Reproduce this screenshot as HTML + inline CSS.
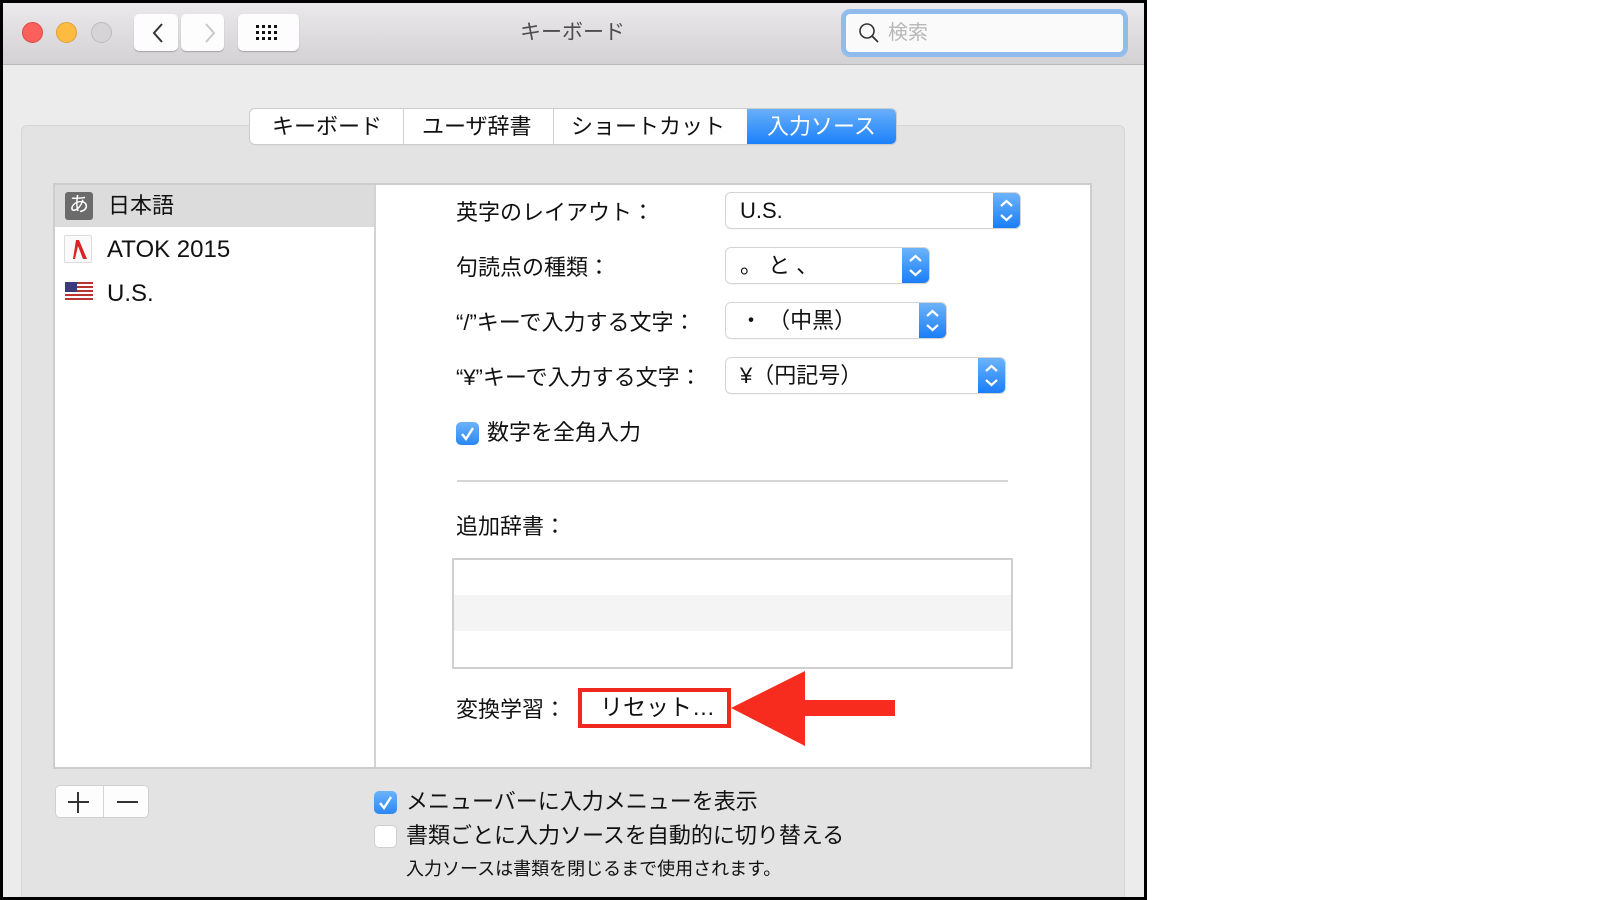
<!DOCTYPE html>
<html><head><meta charset="utf-8"><style>
*{margin:0;padding:0;box-sizing:border-box}
body{width:1600px;height:900px;background:#fff;position:relative;overflow:hidden;font-family:"Liberation Sans","Noto Sans CJK JP",sans-serif;color:#111}
.a{position:absolute}
.win{left:0;top:0;width:1147px;height:900px;background:#000}
.inner{left:3px;top:3px;width:1141px;height:894px;background:#ececec}
.tb{left:3px;top:3px;width:1141px;height:62px;background:linear-gradient(#ebe9eb,#d3d1d3);border-bottom:1px solid #b9b7b9}
.light{width:21px;height:21px;border-radius:50%;top:22px}
.btn{background:#fdfdfd;border-radius:5px;box-shadow:0 1px 1px rgba(0,0,0,.25)}
.t{white-space:nowrap;line-height:1}
.pop{background:#fff;border-radius:5px;box-shadow:0 0 0 1px #d4d4d4,0 1px 1px rgba(0,0,0,.2);height:35px}
.pop .b{position:absolute;right:0;top:0;width:27px;height:35px;background:linear-gradient(#6cb3fa,#1a7ef8);border-radius:0 5px 5px 0}
.pop .v{position:absolute;left:14px;top:7px;font-size:22px}
.cb{width:23px;height:23px;border-radius:5px;background:linear-gradient(#6cb3fa,#2a87f5)}
</style></head><body>
<div class="a win"></div>
<div class="a inner"></div>
<div class="a tb"></div>
<div class="a light" style="left:22px;background:#fc605c;border:1px solid #de4a46"></div>
<div class="a light" style="left:56px;background:#fdbc40;border:1px solid #dea235"></div>
<div class="a light" style="left:91px;background:#d6d4d6;border:1px solid #bdbbbd"></div>
<div class="a btn" style="left:134px;top:14px;width:44px;height:37px"></div>
<div class="a btn" style="left:181px;top:14px;width:43px;height:37px"></div>
<svg class="a" style="left:145px;top:20px" width="80" height="26"><path d="M17 4 L9 13 L17 22" fill="none" stroke="#333" stroke-width="2"/><path d="M61 4 L69 13 L61 22" fill="none" stroke="#c8c8c8" stroke-width="2"/></svg>
<div class="a btn" style="left:238px;top:14px;width:61px;height:37px"></div>
<svg class="a" style="left:256px;top:25px" width="26" height="16"><g fill="#111"><rect x="0" y="0" width="3" height="3"/><rect x="6" y="0" width="3" height="3"/><rect x="12" y="0" width="3" height="3"/><rect x="18" y="0" width="3" height="3"/><rect x="0" y="6" width="3" height="3"/><rect x="6" y="6" width="3" height="3"/><rect x="12" y="6" width="3" height="3"/><rect x="18" y="6" width="3" height="3"/><rect x="0" y="12" width="3" height="3"/><rect x="6" y="12" width="3" height="3"/><rect x="12" y="12" width="3" height="3"/><rect x="18" y="12" width="3" height="3"/></g></svg>
<div class="a t" style="left:520px;top:22px;font-size:21px;color:#4d4d4d">キーボード</div>
<div class="a" style="left:842px;top:10px;width:285px;height:46px;border-radius:8px;background:#fafafa;box-shadow:0 0 0 4px #8fbcec inset, 0 0 0 1px #8fbcec"></div>
<svg class="a" style="left:858px;top:22px" width="22" height="22"><circle cx="9" cy="9" r="7" fill="none" stroke="#333" stroke-width="1.6"/><path d="M14 14 L20 20" stroke="#333" stroke-width="1.8"/></svg>
<div class="a t" style="left:888px;top:23px;font-size:20px;color:#b8b8b8">検索</div>

<div class="a" style="left:21px;top:125px;width:1104px;height:772px;background:#e3e3e3;border:1px solid #d6d6d6;border-bottom:none;border-radius:6px 6px 0 0"></div>
<div class="a" style="left:250px;top:109px;width:646px;height:35px;background:#fff;border-radius:5px;box-shadow:0 0 0 1px #cdcdcd,0 1px 1px rgba(0,0,0,.2)"></div>
<div class="a" style="left:403px;top:109px;width:1px;height:35px;background:#d0d0d0"></div>
<div class="a" style="left:553px;top:109px;width:1px;height:35px;background:#d0d0d0"></div>
<div class="a" style="left:747px;top:109px;width:149px;height:35px;background:linear-gradient(#69b0fa,#1b80fb);border-radius:0 5px 5px 0"></div>
<div class="a t" style="left:272px;top:116px;font-size:22px">キーボード</div>
<div class="a t" style="left:422px;top:116px;font-size:22px">ユーザ辞書</div>
<div class="a t" style="left:571px;top:116px;font-size:22px">ショートカット</div>
<div class="a t" style="left:767px;top:116px;font-size:22px;color:#fff">入力ソース</div>

<div class="a" style="left:53px;top:183px;width:1039px;height:586px;background:#fff;border:2px solid #cdcdcd"></div>
<div class="a" style="left:374px;top:185px;width:2px;height:582px;background:#d3d3d3"></div>
<div class="a" style="left:55px;top:185px;width:319px;height:42px;background:#dcdcdc"></div>
<div class="a" style="left:65px;top:192px;width:28px;height:28px;background:#6b6b6b;border-radius:3px;color:#fff;font-size:20px;text-align:center;line-height:27px">あ</div>
<div class="a t" style="left:108px;top:195px;font-size:22px">日本語</div>
<div class="a" style="left:64px;top:235px;width:28px;height:28px;background:#fafafa;border:1px solid #ddd;border-radius:2px"></div>
<svg class="a" style="left:64px;top:235px" width="28" height="28"><path d="M12 5 L15 5 L23 24 L19 24 L14 11 L11 24 L9 24 Z" fill="#d92424"/></svg>
<div class="a t" style="left:107px;top:238px;font-size:24px">ATOK 2015</div>
<svg class="a" style="left:65px;top:282px" width="28" height="18"><rect width="28" height="18" fill="#fff"/><g fill="#b33"><rect y="0" width="28" height="2"/><rect y="4" width="28" height="2"/><rect y="8" width="28" height="2"/><rect y="12" width="28" height="2"/><rect y="16" width="28" height="2"/></g><rect width="12" height="10" fill="#3b3b7a"/></svg>
<div class="a t" style="left:107px;top:282px;font-size:24px">U.S.</div>

<div class="a t" style="left:456px;top:202px;font-size:22px">英字のレイアウト：</div>
<div class="a t" style="left:456px;top:257px;font-size:22px">句読点の種類：</div>
<div class="a t" style="left:456px;top:312px;font-size:22px">“/”キーで入力する文字：</div>
<div class="a t" style="left:456px;top:367px;font-size:22px">“¥”キーで入力する文字：</div>
<svg width="0" height="0" style="position:absolute"><defs><symbol id="ud" viewBox="0 0 27 35"><path d="M8 13 L13.5 8 L19 13 M8 22 L13.5 27 L19 22" fill="none" stroke="#fff" stroke-width="2.2"/></symbol></defs></svg>
<div class="a pop" style="left:726px;top:193px;width:294px"><span class="v t">U.S.</span><div class="b"><svg width="27" height="35"><use href="#ud"/></svg></div></div>
<div class="a pop" style="left:726px;top:248px;width:203px"><span class="v t">。 と 、</span><div class="b"><svg width="27" height="35"><use href="#ud"/></svg></div></div>
<div class="a pop" style="left:726px;top:303px;width:220px"><span class="v t">・ （中黒）</span><div class="b"><svg width="27" height="35"><use href="#ud"/></svg></div></div>
<div class="a pop" style="left:726px;top:358px;width:279px"><span class="v t">¥（円記号）</span><div class="b"><svg width="27" height="35"><use href="#ud"/></svg></div></div>

<div class="a cb" style="left:456px;top:422px"><svg width="23" height="23"><path d="M6 12 L10 17 L17 6" fill="none" stroke="#fff" stroke-width="2.4"/></svg></div>
<div class="a t" style="left:487px;top:422px;font-size:22px">数字を全角入力</div>
<div class="a" style="left:457px;top:480px;width:551px;height:2px;background:#d6d6d6"></div>
<div class="a t" style="left:456px;top:516px;font-size:22px">追加辞書：</div>
<div class="a" style="left:452px;top:558px;width:561px;height:111px;background:#fff;border:2px solid #cfcfcf"></div>
<div class="a" style="left:454px;top:595px;width:557px;height:36px;background:#f4f4f4"></div>
<div class="a t" style="left:456px;top:699px;font-size:22px">変換学習：</div>
<div class="a" style="left:578px;top:688px;width:153px;height:40px;border:4px solid #ee2a1f;background:#fff"></div>
<div class="a t" style="left:600px;top:696px;font-size:23px">リセット…</div>
<svg class="a" style="left:730px;top:670px" width="170" height="77"><path d="M1 38 L75 1 L75 30 L165 30 L165 46 L75 46 L75 76 Z" fill="#f82b1f"/></svg>

<div class="a btn" style="left:55px;top:785px;width:94px;height:33px;border:1px solid #d0d0d0;box-shadow:none"></div>
<div class="a" style="left:103px;top:786px;width:1px;height:31px;background:#d5d5d5"></div>
<div class="a" style="left:68px;top:801px;width:21px;height:2px;background:#333"></div>
<div class="a" style="left:77px;top:792px;width:2px;height:21px;background:#333"></div>
<div class="a" style="left:117px;top:801px;width:21px;height:2px;background:#333"></div>
<div class="a cb" style="left:374px;top:791px"><svg width="23" height="23"><path d="M6 12 L10 17 L17 6" fill="none" stroke="#fff" stroke-width="2.4"/></svg></div>
<div class="a t" style="left:406px;top:791px;font-size:22px">メニューバーに入力メニューを表示</div>
<div class="a" style="left:374px;top:825px;width:23px;height:23px;border-radius:5px;background:#fff;border:1px solid #cfcfcf"></div>
<div class="a t" style="left:406px;top:825px;font-size:22px">書類ごとに入力ソースを自動的に切り替える</div>
<div class="a t" style="left:406px;top:860px;font-size:18px">入力ソースは書類を閉じるまで使用されます。</div>
<div class="a" style="left:0;top:897px;width:1147px;height:3px;background:#000"></div>
</body></html>
